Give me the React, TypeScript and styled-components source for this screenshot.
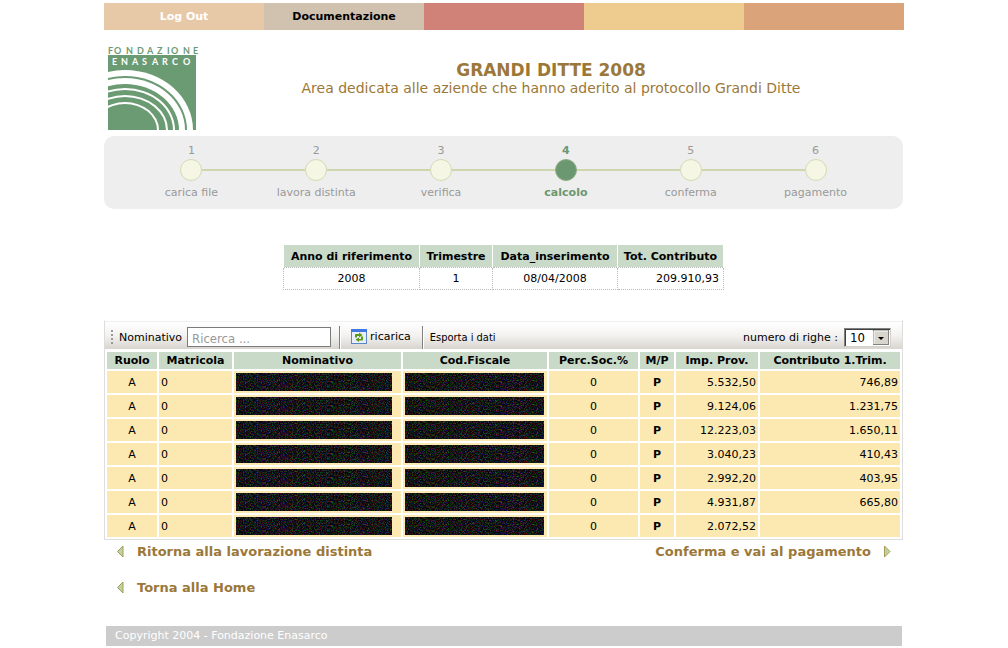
import React from "react";
import styled, { createGlobalStyle, css } from "styled-components";

const verdana = `Verdana, "DejaVu Sans", sans-serif`;
const tahoma = `Tahoma, "DejaVu Sans Condensed", "DejaVu Sans", sans-serif`;

const GlobalStyle = createGlobalStyle`
  * { box-sizing: border-box; }
  body { margin: 0; background: #fff; color: #000; font: 11px/14px ${verdana}; }
`;

const Page = styled.div`
  max-width: 800px;
  margin: 0 auto;
  padding-top: 3px;
`;

const Nav = styled.nav`
  display: grid;
  grid-template-columns: repeat(5, 1fr);
  height: 27px;
`;

const NavCell = styled.div<{ $bg: string }>`
  display: flex;
  align-items: center;
  justify-content: center;
  background: ${(p) => p.$bg};
`;

const NavLink = styled.a<{ $color: string }>`
  color: ${(p) => p.$color};
  font-weight: bold;
  text-decoration: none;
`;

const Header = styled.header`
  display: flex;
  padding: 12px 6px 6px 4px;
`;

const Titles = styled.div`
  flex: 1;
  padding-top: 18px;
  text-align: center;
  color: #9b7839;
`;

const Title = styled.h1`
  margin: 0;
  font-size: 17px;
  line-height: 20px;
`;

const Subtitle = styled.p`
  margin: 0;
  font-size: 14px;
  line-height: 16px;
`;

const Main = styled.main`
  margin-right: 1px;
`;

const Steps = styled.ol`
  display: grid;
  grid-template-columns: repeat(6, 1fr);
  margin: 0;
  padding: 8px 25px 9px;
  list-style: none;
  background: #eee;
  border-radius: 10px;
`;

const Step = styled.li<{ $active: boolean }>`
  display: flex;
  flex-direction: column;
  align-items: center;
  color: ${(p) => (p.$active ? "#6c9871" : "#999")};
  font-weight: ${(p) => (p.$active ? "bold" : "normal")};
`;

const Track = styled.span<{ $first: boolean; $last: boolean }>`
  display: flex;
  align-items: center;
  align-self: stretch;
  height: 24px;
  margin-bottom: 4px;
  &::before,
  &::after {
    content: "";
    flex: 1;
    height: 2px;
    background: #cdd6ac;
  }
  ${(p) => p.$first && css`&::before { background: none; }`}
  ${(p) => p.$last && css`&::after { background: none; }`}
`;

const Dot = styled.span<{ $active: boolean }>`
  width: 22px;
  height: 22px;
  border: 1px solid ${(p) => (p.$active ? "#8fae85" : "#d3dbb4")};
  border-radius: 50%;
  background: ${(p) => (p.$active ? "#6c9871" : "#f5f6e4")};
`;

const Summary = styled.table`
  width: 440px;
  margin: 36px auto 30px;
  border-collapse: collapse;
  table-layout: fixed;
`;

const SummaryHead = styled.th`
  height: 22px;
  padding: 2px 0 0;
  background: #c9dac8;
  border-left: 1px solid #fff;
  border-right: 1px solid #fff;
  white-space: nowrap;
`;

const SummaryCell = styled.td<{ $right?: boolean }>`
  height: 22px;
  padding: 2px 4px 0;
  border: 1px dotted #bbb;
  text-align: ${(p) => (p.$right ? "right" : "center")};
`;

const Panel = styled.section`
  border: 1px solid #ddd;
  border-top-color: #fff;
`;

const Toolbar = styled.div`
  display: flex;
  align-items: center;
  height: 28px;
  margin-bottom: 1px;
  padding: 4px 11px 0 6px;
  border-top: 1px solid #f0f0f0;
  background: linear-gradient(#fff, #f3f2f0 50%, #d8d5cf);
`;

const Grip = styled.span`
  width: 2px;
  height: 14px;
  margin-right: 6px;
  background: repeating-linear-gradient(#999 0 2px, transparent 2px 4px);
`;

const FieldLabel = styled.label<{ $end?: boolean }>`
  padding-top: 2px;
  margin-left: ${(p) => (p.$end ? "auto" : "0")};
`;

const Search = styled.input`
  width: 144px;
  height: 20px;
  margin: 0 8px 0 5px;
  padding: 2px 4px 0;
  border: 1px solid #7b7b7b;
  border-radius: 0;
  background: #fff;
  font: 13px/16px ${tahoma};
  &::placeholder { color: #999; }
`;

const Divider = styled.span`
  align-self: stretch;
  width: 2px;
  border-left: 1px solid #808080;
  border-right: 1px solid #fff;
`;

const ToolButton = styled.button<{ $narrow?: boolean }>`
  display: flex;
  align-items: center;
  gap: 3px;
  padding: ${(p) => (p.$narrow ? "2px 6px 0" : "0 11px 0 10px")};
  border: 0;
  background: none;
  color: #000;
  font: 11px/14px ${(p) => (p.$narrow ? tahoma : verdana)};
`;

const SelectBox = styled.span`
  display: flex;
  width: 47px;
  height: 19px;
  margin-left: 6px;
  border: 1px solid #d4d0c8;
  border-top-color: #808080;
  border-left-color: #808080;
  background: #fff;
  box-shadow: inset 1px 1px #404040;
  position: relative;
`;

const RowsSelect = styled.select`
  width: 100%;
  padding: 1px 0 0 5px;
  border: 0;
  appearance: none;
  background: none;
  color: #000;
  font: 13px/16px ${tahoma};
`;

const SelectArrow = styled.svg`
  position: absolute;
  top: 1px;
  right: 1px;
  pointer-events: none;
`;

const Grid = styled.table`
  width: 100%;
  border-spacing: 2px;
  table-layout: fixed;
`;

const GridHead = styled.th`
  height: 17px;
  padding: 0;
  background: #c9dac8;
  line-height: 17px;
  white-space: nowrap;
`;

type Align = "left" | "center" | "right";

const GridCell = styled.td<{ $align: Align; $bold?: boolean }>`
  height: 22px;
  padding: 2px 2px 0;
  background: #fbe9b1;
  line-height: 18px;
  text-align: ${(p) => p.$align};
  font-weight: ${(p) => (p.$bold ? "bold" : "normal")};
`;

const RedactedCell = styled(GridCell)`
  padding: 0 2px;
`;

const Redaction = styled.svg`
  display: block;
  height: 18px;
`;

const Links = styled.nav`
  display: grid;
  grid-template-columns: 1fr auto;
  row-gap: 20px;
  padding: 4px 12px 30px 13px;
`;

const PageLink = styled.a`
  display: flex;
  align-items: center;
  gap: 13px;
  color: #9b7839;
  font-size: 13px;
  font-weight: bold;
  line-height: 16px;
  text-decoration: none;
`;

const Footer = styled.footer`
  margin: 0 2px;
  padding: 3px 9px;
  background: #ccc;
  color: #fff;
`;

const logoTop: [string, string] = ["FONDAZIONE", "0 6 18 29 39 49 59 63 75 85"];
const logoBottom: [string, string] = ["ENASARCO", "4 13 24 34 44 54 64 75"];

function Logo() {
  const rings: [number, number, string][] = [
    [68, 60, "#fff"], [62, 54, "#6b9b73"], [60, 52, "#fff"], [54, 46, "#6b9b73"],
    [50, 42, "#fff"], [48, 40, "#6b9b73"], [43, 35, "#fff"], [41, 33, "#6b9b73"],
    [34, 28, "#fff"], [32, 26, "#6b9b73"],
  ];
  return (
    <svg width="96" height="88" viewBox="0 -4 96 88" role="img" aria-label="Fondazione Enasarco">
      <rect y="9" width="88" height="75" fill="#6b9b73" />
      {rings.map(([rx, ry, fill], i) => (
        <ellipse key={i} cx="17" cy="84" rx={rx} ry={ry} fill={fill} />
      ))}
      <g fontFamily="Lato, sans-serif" fontSize="9" fontWeight="bold">
        <text x={logoTop[1]} y="8" fill="#6b9b73">{logoTop[0]}</text>
        <text x={logoBottom[1]} y="19" fill="#fff">{logoBottom[0]}</text>
      </g>
    </svg>
  );
}

function ReloadIcon() {
  return (
    <svg width="16" height="16" viewBox="0 0 16 16" aria-hidden="true">
      <rect x=".5" y=".5" width="15" height="14" fill="#e8effa" stroke="#5b86c4" />
      <rect width="16" height="3" fill="#3f78e0" />
      <path d="M4 8.500V6Q4 5 5 5H8V3.500L11.500 6 8 8.500V7H6V8.500Z" fill="#5a9a10" />
      <path d="M12 7.500V10Q12 11.500 11 11.500H8V13L4.500 10.500 8 8.500V10H10V7.500Z" fill="#5a9a10" />
    </svg>
  );
}

function Arrow({ right }: { right?: boolean }) {
  return (
    <svg width="7" height="13" viewBox="0 0 7 13" aria-hidden="true">
      <path
        d={right ? "M.5 1v11L6 6.500Z" : "M6 1v11L.5 6.500Z"}
        fill="#bcd3a4"
        stroke="#a89a55"
      />
    </svg>
  );
}

function Noise({ width }: { width: number }) {
  return (
    <Redaction width={width} height="18" role="img" aria-label="dato oscurato">
      <rect width="100%" height="100%" fill="#000" />
      <rect width="100%" height="100%" filter="url(#noise)" />
    </Redaction>
  );
}

const navItems = [
  { bg: "#e8c9a7", label: "Log Out", color: "#fff" },
  { bg: "#d1c2b0", label: "Documentazione", color: "#000" },
  { bg: "#d08178" },
  { bg: "#eecb8e" },
  { bg: "#dba37a" },
];
const steps = ["carica file", "lavora distinta", "verifica", "calcolo", "conferma", "pagamento"];
const activeStep = 3;
const columns: [string, number][] = [
  ["Ruolo", 50], ["Matricola", 73], ["Nominativo", 167], ["Cod.Fiscale", 144],
  ["Perc.Soc.%", 89], ["M/P", 34], ["Imp. Prov.", 82], ["Contributo 1.Trim.", 140],
];
const rows = [
  ["5.532,50", "746,89"],
  ["9.124,06", "1.231,75"],
  ["12.223,03", "1.650,11"],
  ["3.040,23", "410,43"],
  ["2.992,20", "403,95"],
  ["4.931,87", "665,80"],
  ["2.072,52", ""],
];

export default function App() {
  return (
    <Page>
      <GlobalStyle />
      <Nav>
        {navItems.map((n) => (
          <NavCell key={n.bg} $bg={n.bg}>
            {n.label && <NavLink href="#" $color={n.color!}>{n.label}</NavLink>}
          </NavCell>
        ))}
      </Nav>
      <Header>
        <Logo />
        <Titles>
          <Title>GRANDI DITTE 2008</Title>
          <Subtitle>Area dedicata alle aziende che hanno aderito al protocollo Grandi Ditte</Subtitle>
        </Titles>
      </Header>
      <Main>
        <Steps>
          {steps.map((s, i) => (
            <Step key={s} $active={i === activeStep}>
              <span>{i + 1}</span>
              <Track $first={i === 0} $last={i === steps.length - 1}>
                <Dot $active={i === activeStep} />
              </Track>
              <span>{s}</span>
            </Step>
          ))}
        </Steps>
        <Summary>
          <colgroup>
            {[136, 73, 125, 106].map((w) => <col key={w} width={w} />)}
          </colgroup>
          <thead>
            <tr>
              <SummaryHead>Anno di riferimento</SummaryHead>
              <SummaryHead>Trimestre</SummaryHead>
              <SummaryHead>Data_inserimento</SummaryHead>
              <SummaryHead>Tot. Contributo</SummaryHead>
            </tr>
          </thead>
          <tbody>
            <tr>
              <SummaryCell>2008</SummaryCell>
              <SummaryCell>1</SummaryCell>
              <SummaryCell>08/04/2008</SummaryCell>
              <SummaryCell $right>209.910,93</SummaryCell>
            </tr>
          </tbody>
        </Summary>
        <Panel>
          <Toolbar>
            <Grip />
            <FieldLabel htmlFor="search">Nominativo</FieldLabel>
            <Search id="search" type="text" placeholder="Ricerca ..." />
            <Divider />
            <ToolButton type="button"><ReloadIcon />ricarica</ToolButton>
            <Divider />
            <ToolButton type="button" $narrow>Esporta i dati</ToolButton>
            <FieldLabel $end htmlFor="rows">numero di righe :</FieldLabel>
            <SelectBox>
              <RowsSelect id="rows" defaultValue="10">
                <option>10</option>
                <option>20</option>
              </RowsSelect>
              <SelectArrow width="16" height="15" viewBox="0 0 16 15" aria-hidden="true">
                <rect x=".5" y=".5" width="15" height="14" fill="#d8d5cd" stroke="#808080" />
                <path d="M1 14V1H15" fill="none" stroke="#fff" />
                <path d="M5 7h6l-3 3Z" fill="#000" />
              </SelectArrow>
            </SelectBox>
          </Toolbar>
          <Grid>
            <colgroup>
              {columns.map(([name, w]) => <col key={name} width={w} />)}
            </colgroup>
            <thead>
              <tr>{columns.map(([name]) => <GridHead key={name}>{name}</GridHead>)}</tr>
            </thead>
            <tbody>
              {rows.map(([imp, contributo]) => (
                <tr key={imp}>
                  <GridCell $align="center">A</GridCell>
                  <GridCell $align="left">0</GridCell>
                  <RedactedCell $align="left"><Noise width={156} /></RedactedCell>
                  <RedactedCell $align="left"><Noise width={139} /></RedactedCell>
                  <GridCell $align="center">0</GridCell>
                  <GridCell $align="center" $bold>P</GridCell>
                  <GridCell $align="right">{imp}</GridCell>
                  <GridCell $align="right">{contributo}</GridCell>
                </tr>
              ))}
            </tbody>
          </Grid>
        </Panel>
        <Links>
          <PageLink href="#"><Arrow />Ritorna alla lavorazione distinta</PageLink>
          <PageLink href="#">Conferma e vai al pagamento<Arrow right /></PageLink>
          <PageLink href="#"><Arrow />Torna alla Home</PageLink>
        </Links>
      </Main>
      <Footer>Copyright 2004 - Fondazione Enasarco</Footer>
      <svg width="0" height="0" display="block" aria-hidden="true">
        <filter id="noise" x="0" y="0" width="100%" height="100%" colorInterpolationFilters="sRGB">
          <feTurbulence type="fractalNoise" baseFrequency="0.83" numOctaves="3" seed="4" />
          <feColorMatrix values=".9 0 0 0 -.38  0 .9 0 0 -.38  0 0 .9 0 -.37  0 0 0 0 1" />
        </filter>
      </svg>
    </Page>
  );
}
